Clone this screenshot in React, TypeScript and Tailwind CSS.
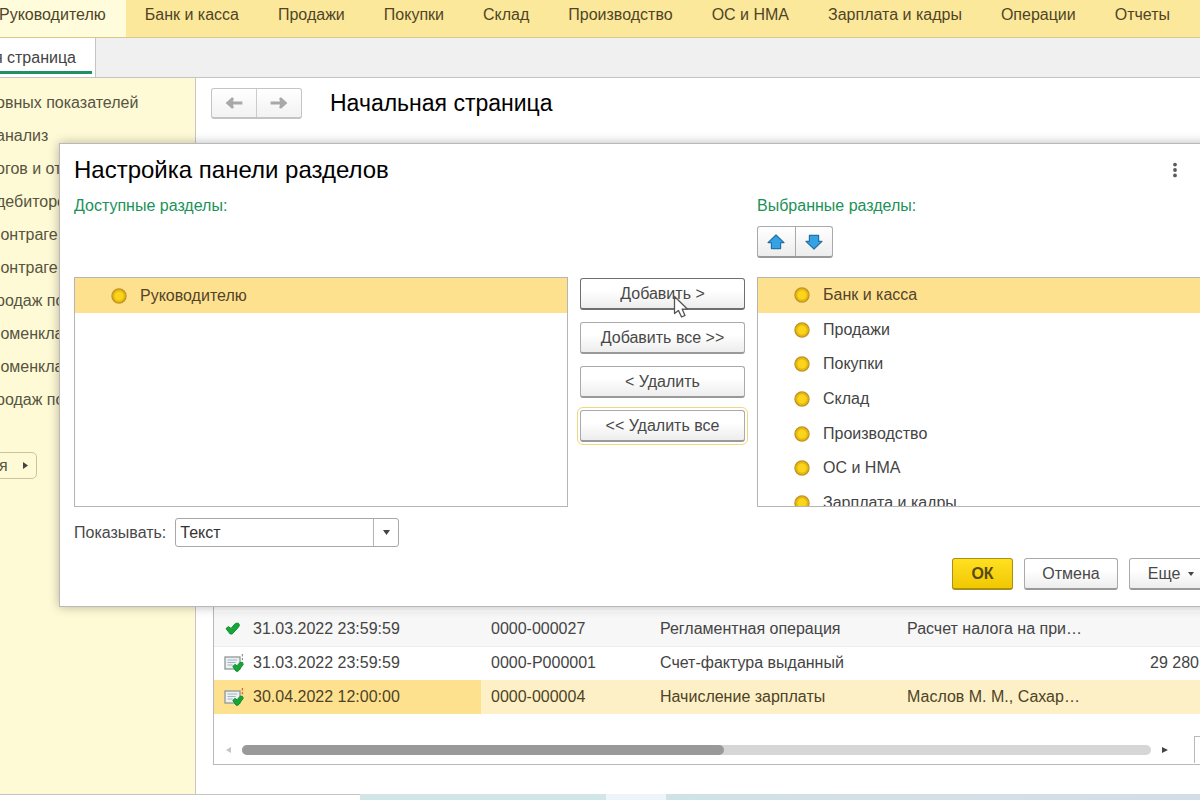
import { useState } from "react";

const sections = ["Банк и касса", "Продажи", "Покупки", "Склад", "Производство", "ОС и НМА", "Зарплата и кадры"];
const navItems = ["Руководителю", ...sections, "Операции", "Отчеты"];

const reports = [
  "овных показателей",
  "анализ",
  "огов и от",
  "дебиторс",
  " онтраге",
  " онтраге",
  "родаж по",
  " оменкла",
  " оменкла",
  "родаж по",
];

type Row = { state: "check" | "doc" | "docAlert"; date: string; number: string; kind: string; info: string; sum: string };

const rows: Row[] = [
  { state: "check", date: "31.03.2022 23:59:59", number: "0000-000027", kind: "Регламентная операция", info: "Расчет налога на при…", sum: "" },
  { state: "doc", date: "31.03.2022 23:59:59", number: "0000-P000001", kind: "Счет-фактура выданный", info: "", sum: "29 280" },
  { state: "docAlert", date: "30.04.2022 12:00:00", number: "0000-000004", kind: "Начисление зарплаты", info: "Маслов М. М., Сахар…", sum: "" },
];

const buttonBase =
  "flex items-center justify-center rounded-[3px] border border-[#aaa] border-b-2 border-b-[#999] bg-linear-to-b from-white from-40% to-[#ededed] text-[#484848]";

function StateIcon({ state }: { state: Row["state"] }) {
  if (state === "check") {
    return (
      <svg className="h-5 w-[22px] shrink-0" viewBox="0 0 22 20" aria-hidden="true">
        <path d="M4 9.6 L6.4 7.6 L9 9.4 L13.4 4.4 L16.4 4.2 L17.4 6 L16.6 8 L10.2 15 L8.2 15 Z" fill="#16a637" stroke="#0f8f2c" strokeWidth="1" strokeLinejoin="round" />
      </svg>
    );
  }
  return (
    <svg className="h-5 w-[22px] shrink-0" viewBox="0 0 22 20" aria-hidden="true">
      <rect x="3" y="4" width="15" height="12" fill="#eef1f1" stroke="#8f9899" strokeWidth="1.3" />
      <path d="M5.6 7h9.6M5.6 9.5h8M5.6 12h5" stroke="#9fb3c4" strokeWidth="1.1" />
      <path d="M10.8 13.4 L13 11.4 L15 12.8 L18.2 9.2 L20.6 9.4 L21.2 11.4 L16.2 18.2 L14 18.2 Z" fill="#16a637" stroke="#0f8f2c" strokeWidth="1" strokeLinejoin="round" />
      <path d="M20.4 1v2.4M20.4 5v2.2" stroke={state === "docAlert" ? "#e0643c" : "#8c9aa8"} strokeWidth="1.3" />
    </svg>
  );
}

function Coin() {
  return (
    <svg className="h-4 w-4 shrink-0" viewBox="0 0 16 16" aria-hidden="true">
      <circle cx="8" cy="8" r="7.1" fill="#e9b80c" stroke="#bd9422" strokeWidth="1.2" />
      <circle cx="8" cy="8" r="4.6" fill="#fbd51c" />
    </svg>
  );
}

function BlueArrow({ down = false }: { down?: boolean }) {
  return (
    <svg className={down ? "h-4 w-[18px] rotate-180" : "h-4 w-[18px]"} viewBox="0 0 18 16" aria-hidden="true">
      <path d="M9 1 L17 8.6 H13.6 V14.6 H4.4 V8.6 H1 Z" fill="#33a3e6" stroke="#27709f" strokeWidth="1.2" strokeLinejoin="round" />
    </svg>
  );
}

function GreyArrow({ right = false }: { right?: boolean }) {
  return (
    <svg className={right ? "h-3 w-[18px] rotate-180" : "h-3 w-[18px]"} viewBox="0 0 18 12" aria-hidden="true">
      <path d="M0.6 6 L7 0.3 L8.8 1.2 L8 4.6 H17.4 V7.4 H8 L8.8 10.8 L7 11.7 Z" fill="#a8a8a8" />
    </svg>
  );
}

function SettingsDialog() {
  const [view, setView] = useState("Текст");
  return (
    <div
      role="dialog"
      aria-labelledby="dialog-title"
      className="absolute top-[143px] -right-7 left-[59px] border border-[#b9b9b9] bg-white px-[14px] pt-[10px] pb-4 shadow-[0_0_10px_rgba(0,0,0,0.28)]"
    >
      <div className="mb-2 flex items-center justify-between pr-[30px]">
        <h2 id="dialog-title" className="text-[24px] leading-8 text-black">Настройка панели разделов</h2>
        <button aria-label="Меню" className="flex h-6 w-4 items-center justify-center">
          <svg className="h-4 w-1" viewBox="0 0 4 16" fill="#5a5a5a" aria-hidden="true">
            <circle cx="2" cy="2.6" r="1.9" />
            <circle cx="2" cy="8" r="1.9" />
            <circle cx="2" cy="13.4" r="1.9" />
          </svg>
        </button>
      </div>

      <div className="grid grid-cols-[494px_165px_1fr] gap-x-3">
        <h3 className="leading-6 text-[#1c9159]">Доступные разделы:</h3>
        <h3 className="col-start-3 leading-6 text-[#1c9159]">Выбранные разделы:</h3>

        <div className="col-start-3 mt-2 mb-[19px] flex h-8 w-[76px] rounded-[3px] border border-b-2 border-[#aaa] border-b-[#999] bg-linear-to-b from-white to-[#ededed]">
          <button aria-label="Вверх" className="flex flex-1 items-center justify-center border-r border-[#aaa]"><BlueArrow /></button>
          <button aria-label="Вниз" className="flex flex-1 items-center justify-center"><BlueArrow down /></button>
        </div>

        <ul className="col-start-1 h-[230px] border border-[#b5b5b5]">
          <li className="flex h-[35px] items-center gap-[13px] bg-[#fee18f] pl-9 text-[#54432a]">
            <Coin />Руководителю
          </li>
        </ul>

        <div className="flex flex-col gap-3 pt-px">
          <button className={`${buttonBase} relative h-8 !border-[#6f6f6f]`}>
            Добавить &gt;
            <svg className="absolute top-4 left-[92px] h-6 w-4" viewBox="0 0 16 24" aria-hidden="true">
              <path d="M1.5 1.5 V18.6 L5.4 15.4 L8.6 22 L12 20.4 L9.2 14.2 H14.6 Z" fill="#fff" stroke="#555" strokeWidth="1.3" strokeLinejoin="round" />
            </svg>
          </button>
          <button className={`${buttonBase} h-8`}>Добавить все &gt;&gt;</button>
          <button className={`${buttonBase} h-8`}>&lt; Удалить</button>
          <button className={`${buttonBase} h-8 outline outline-offset-2 outline-[#f0d87c]`}>&lt;&lt; Удалить все</button>
        </div>

        <div className="h-[230px] overflow-hidden border border-[#b5b5b5]">
          <ul className="grid h-[242px] grid-rows-7">
            {sections.map((name, i) => (
              <li key={name} className={`flex items-center gap-[13px] pl-9 ${i === 0 ? "bg-[#fee18f] text-[#54432a]" : "text-[#444]"}`}>
                <Coin />{name}
              </li>
            ))}
          </ul>
        </div>
      </div>

      <div className="mt-[11px] flex items-center gap-[9px] text-[#484848]">
        <label htmlFor="view">Показывать:</label>
        <div className="relative">
          <select
            id="view"
            value={view}
            onChange={(e) => setView(e.target.value)}
            className="block h-[29px] w-[224px] appearance-none rounded-[3px] border border-[#a8a8a8] bg-white pl-1 text-[#333]"
          >
            <option>Текст</option>
            <option>Картинка</option>
            <option>Картинка и текст</option>
          </select>
          <span className="pointer-events-none absolute inset-y-px right-px flex w-[25px] items-center justify-center border-l border-[#b5b5b5]">
            <svg className="h-[5px] w-[7px]" viewBox="0 0 7 5" aria-hidden="true"><path d="M0 0h7L3.5 5z" fill="#444" /></svg>
          </span>
        </div>
      </div>

      <div className="mt-[11px] flex justify-end gap-[11px]">
        <button className="h-8 w-[61px] rounded-[3px] border border-b-2 border-[#a98f18] bg-linear-to-b from-[#ffe01f] to-[#f1c800] font-bold text-[#5a4a10]">ОК</button>
        <button className={`${buttonBase} h-8 w-[94px]`}>Отмена</button>
        <button className={`${buttonBase} h-8 w-[84px] gap-2`}>
          Еще
          <svg className="h-1 w-[6px]" viewBox="0 0 6 4" aria-hidden="true"><path d="M0 0h6L3 4z" fill="#444" /></svg>
        </button>
      </div>
    </div>
  );
}

export default function App() {
  return (
    <div className="relative flex h-screen flex-col overflow-hidden bg-white font-['Liberation_Sans',Arial,sans-serif] text-[16px] leading-5 text-[#444]">
      <nav className="flex h-[38px] shrink-0 border-b border-[#d8c88a] bg-[#fce89b] whitespace-nowrap text-[#4f4526]">
        <div className="-ml-5 flex">
          {navItems.map((name, i) => (
            <a key={name} href="#" className={`pt-[5px] pr-5 pl-[19px] ${i === 0 ? "bg-[#fffcdc]" : ""}`}>{name}</a>
          ))}
        </div>
      </nav>

      <div className="flex h-10 shrink-0 border-b border-[#c4c4c4] bg-[#f0f0f0]">
        <a href="#" className="flex w-24 justify-end border-r border-[#c4c4c4] bg-white pr-[3px] pb-[3px] whitespace-nowrap">
          <span className="flex w-full items-center justify-end border-b-[3px] border-[#1f8f66] pt-[6px] pr-4">я страница</span>
        </a>
      </div>

      <div className="flex min-h-0 flex-1">
        <aside className="w-[196px] shrink-0 overflow-hidden border-r border-[#c6c6c6] bg-[#fefad6] pt-2 text-[#57543f]">
          <ul className="-ml-1">
            {reports.map((name, i) => (
              <li key={i} className="leading-[33px] whitespace-pre"><a href="#">{name}</a></li>
            ))}
          </ul>
          <button className="mt-9 -ml-1 flex h-[27px] w-[41px] items-center justify-between rounded-r-[5px] border border-[#c9c49c] pr-2 pl-[2px]">
            я
            <svg className="h-[7px] w-[5px]" viewBox="0 0 5 7" aria-hidden="true"><path d="M0 0v7l5-3.5z" fill="#444" /></svg>
          </button>
        </aside>

        <main className="flex min-w-0 flex-1 flex-col pl-[15px]">
          <div className="flex items-center gap-7 pt-[9px]">
            <div className="flex h-[31px] w-[91px] rounded-[3px] border border-b-2 border-[#c4c4c4] bg-linear-to-b from-white to-[#f2f2f2]">
              <button aria-label="Назад" className="flex flex-1 items-center justify-center border-r border-[#ccc]"><GreyArrow /></button>
              <button aria-label="Вперед" className="flex flex-1 items-center justify-center"><GreyArrow right /></button>
            </div>
            <h1 className="text-[23px] leading-8 text-black">Начальная страница</h1>
          </div>

          <div className="mt-auto mb-[29px] ml-[2px] h-[200px] shrink-0 overflow-hidden border-b border-l border-[#b9b9b9] pt-[47px]">
            <table className="w-[1056px] table-fixed border-collapse">
              <colgroup>
                <col className="w-[267px]" />
                <col className="w-[169px]" />
                <col className="w-[247px]" />
                <col className="w-[243px]" />
                <col />
              </colgroup>
              <tbody>
                {rows.map((row, i) => (
                  <tr
                    key={i}
                    className={`h-[34px] whitespace-nowrap ${i === 2 ? "bg-[#fdf0c6] text-[#4d4326]" : i === 0 ? "border-b border-[#ececec] bg-[#f7f7f7]" : ""}`}
                  >
                    <td className={`pl-2 ${i === 2 ? "bg-[#fee18f]" : ""}`}>
                      <span className="flex items-center">
                        <span className="w-[31px]"><StateIcon state={row.state} /></span>
                        {row.date}
                      </span>
                    </td>
                    <td className="pl-[10px]">{row.number}</td>
                    <td className="pl-[10px]">{row.kind}</td>
                    <td className="pl-[10px]">{row.info}</td>
                    <td className="pl-[10px]">{row.sum}</td>
                  </tr>
                ))}
              </tbody>
            </table>
            <div className="mt-[22px] flex h-[27px] items-center">
              <button aria-label="Прокрутить влево" className="flex w-7 justify-center">
                <svg className="h-[6px] w-[5px]" viewBox="0 0 5 6" aria-hidden="true"><path d="M5 0v6L0 3z" fill="#c4c4c4" /></svg>
              </button>
              <div className="h-[10px] flex-1 rounded-full bg-[#d6d6d6]">
                <div className="h-full w-[53%] rounded-full bg-[#999]" />
              </div>
              <button aria-label="Прокрутить вправо" className="flex w-[27px] justify-center">
                <svg className="h-[6px] w-[6px]" viewBox="0 0 6 6" aria-hidden="true"><path d="M0 0v6l6-3z" fill="#444" /></svg>
              </button>
              <button aria-label="Показать все" className="ml-4 h-full w-[6px] border-t border-l border-[#b9b9b9]" />
            </div>
          </div>
        </main>
      </div>

      <footer className="flex h-[6px] shrink-0">
        <div className="w-[30%] border-t border-[#c4c4c4]" />
        <div className="w-[20.5%] bg-[#d2e5e7]" />
        <div className="w-[5%] bg-[#eef5fa]" />
        <div className="flex-1 bg-linear-to-r from-[#cfe3e6] via-[#d4dfe6] to-[#d3dde8]" />
      </footer>

      <SettingsDialog />
    </div>
  );
}
